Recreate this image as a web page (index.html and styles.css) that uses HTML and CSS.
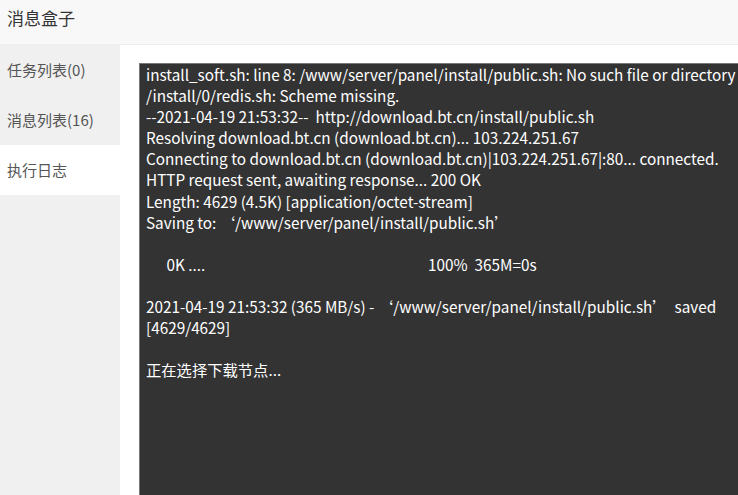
FILE: index.html
```html
<!DOCTYPE html>
<html lang="zh-CN">
<head>
	<meta charset="UTF-8">
	<title>消息盒子</title>
	<link rel="stylesheet" href="styles.css">
</head>
<body>
	<div class="layer">
		<div class="layer-title">消息盒子</div>
		<div class="layer-body">
			<ul class="tabs">
				<li>任务列表(0)</li>
				<li>消息列表(16)</li>
				<li class="on">执行日志</li>
			</ul>
			<div class="content">
				<pre class="log">install_soft.sh: line 8: /www/server/panel/install/public.sh: No such file or directory
/install/0/redis.sh: Scheme missing.
--2021-04-19 21:53:32--  http://download.bt.cn/install/public.sh
Resolving download.bt.cn (download.bt.cn)... 103.224.251.67
Connecting to download.bt.cn (download.bt.cn)|103.224.251.67|:80... connected.
HTTP request sent, awaiting response... 200 OK
Length: 4629 (4.5K) [application/octet-stream]
Saving to: ‘/www/server/panel/install/public.sh’

      0K ....                                                                 100%  365M=0s

2021-04-19 21:53:32 (365 MB/s) - ‘/www/server/panel/install/public.sh’  saved [4629/4629]

正在选择下载节点...</pre>
			</div>
		</div>
	</div>
</body>
</html>
```

FILE: styles.css
```css
* {
	margin: 0;
	padding: 0;
}
html, body {
	height: 100%;
	overflow: hidden;
}
body {
	font-family: "Noto Sans CJK SC", "Noto Sans", sans-serif;
	color: #333;
	background: #fff;
}
.layer {
	height: 100%;
	display: flex;
	flex-direction: column;
}
.layer-title {
	height: 44px;
	line-height: 36px;
	padding-left: 7px;
	font-size: 17px;
	background-color: #f8f8f8;
	border-bottom: 1px solid #eee;
	flex-shrink: 0;
}
.layer-body {
	flex: 1;
	display: flex;
}
.tabs {
	list-style: none;
	width: 120px;
	background-color: #f0f0f0;
	flex-shrink: 0;
}
.tabs li {
	height: 50px;
	line-height: 50px;
	padding-left: 7px;
	font-size: 15px;
	color: #555;
}
.tabs li.on {
	background-color: #fff;
}
.content {
	flex: 1;
	padding: 18px 0 0 19px;
	min-width: 0;
}
.log {
	height: 100%;
	background-color: #333;
	border-top: 1px solid #777;
	border-left: 1px solid #777;
	padding: 0 0 0 6px;
	color: #fff;
	font-family: "Noto Sans CJK SC", "Noto Sans", sans-serif;
	font-size: 15.3px;
	line-height: 21.1px;
	white-space: pre-wrap;
	word-break: break-word;
}
```
